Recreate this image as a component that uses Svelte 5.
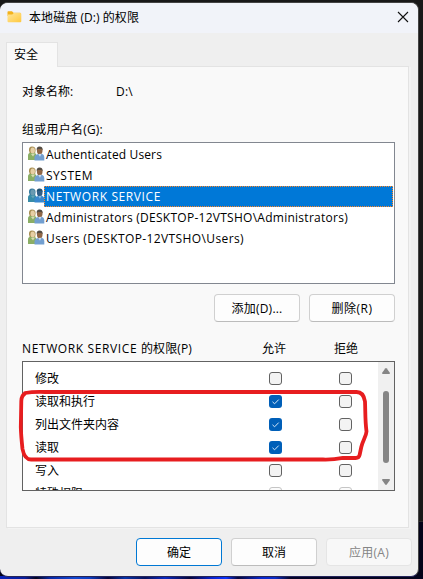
<script>
  const users = [
    { name: 'Authenticated Users', w: 116 },
    { name: 'SYSTEM', w: 47 },
    { name: 'NETWORK SERVICE', w: 115, selected: true },
    { name: 'Administrators (DESKTOP-12VTSHO\\Administrators)', w: 302 },
    { name: 'Users (DESKTOP-12VTSHO\\Users)', w: 198 }
  ];
  const permissions = [
    { name: '修改' },
    { name: '读取和执行', allow: true },
    { name: '列出文件夹内容', allow: true },
    { name: '读取', allow: true },
    { name: '写入' },
    { name: '特殊权限', disabled: true }
  ];

  // Evens out the tracking so that a label takes up its nominal width.
  function fit(node, width) {
    const natural = node.getBoundingClientRect().width;
    node.style.letterSpacing = (width - natural) / node.textContent.length + 'px';
  }
</script>

{#snippet check(on, disabled)}
  <span class="check" class:on class:disabled>
    {#if on}
      <svg width="13" height="13" viewBox="0 0 13 13"><path d="M3.5 6.8 5.6 8.8 9.7 4.6" fill="none" stroke="#d5e8f8" stroke-width="1" /></svg>
    {/if}
  </span>
{/snippet}

<div class="desktop">
  <div class="window">
    <header>
      <svg class="folder" width="15" height="12" viewBox="0 0 15 12">
        <defs><linearGradient id="fold" x2="1" y2="1"><stop stop-color="#ffe69a" /><stop offset="1" stop-color="#ffc83e" /></linearGradient></defs>
        <path d="M.5 1Q.5.2 1.3.2H5L6.5 1.8H13Q14 1.8 14 3V5H.5Z" fill="#f3b21c" />
        <path d="M.5 3.5H5.3L6.8 1.9H13.3Q14.3 1.9 14.3 2.9V10.3Q14.3 11.3 13.3 11.3H1.5Q.5 11.3 .5 10.3Z" fill="url(#fold)" />
      </svg>
      <span class="title"><span use:fit={110}>本地磁盘 (D:) 的权限</span></span>
      <svg class="close" width="12" height="12" viewBox="0 0 12 12"><path d="M1 1 11 11M11 1 1 11" stroke="#111" stroke-width="1.1" /></svg>
    </header>

    <div class="tab">安全</div>
    <main>
      <div class="object"><span class="key">对象名称:</span><span use:fit={17}>D:\</span></div>
      <div class="label"><span use:fit={81}>组或用户名(G):</span></div>

      <div class="users">
        {#each users as u}
          <div class="user" class:selected={u.selected}>
            <svg width="17" height="17" viewBox="1 0 17 17">
              <path d="M1 15V10.5Q1 7.6 4 7.4H6Q9 7.6 9.5 10V15Z" fill={u.selected ? '#388ca8' : '#8bae65'} />
              <path d="M2 5.5Q1.6 1.7 5 1.5 8.7 1.5 8.6 5L8.2 8H2.7Z" fill={u.selected ? '#397c9f' : '#a89055'} />
              <ellipse cx="5.7" cy="5.5" rx="2.2" ry="3" fill={u.selected ? '#6a9bb1' : '#e6cfa4'} />
              <path d="M4 9 6 11.5 8 8.5" fill={u.selected ? '#66a4b8' : '#d6ddb5'} />
              <path d="M7.5 15.5V12Q8 9.3 11 9L15 8.8Q17.2 9.7 17.3 12V15.5Z" fill={u.selected ? '#3988ce' : '#729fd0'} />
              <ellipse cx="12.7" cy="5.8" rx="2.8" ry="3.7" fill={u.selected ? '#315f86' : '#8f6747'} />
              <path d="M9.7 5Q9.4 1.8 12.5 1.6 16 1.7 15.6 5.5L14.5 4 11 4Z" fill={u.selected ? '#23516f' : '#534c43'} />
              <path d="M11.2 9 13 11.8 14.6 8.8" fill={u.selected ? '#83b8e0' : '#c9daee'} />
            </svg>
            <div class="name"><span use:fit={u.w}>{u.name}</span></div>
          </div>
        {/each}
      </div>

      <div class="actions">
        <button><span use:fit={51}>添加(D)...</span></button>
        <button><span use:fit={41}>删除(R)</span></button>
      </div>

      <div class="heads">
        <span class="who"><span use:fit={119}>NETWORK SERVICE&nbsp;</span><span use:fit={51}>的权限(P)</span></span>
        <span class="col">允许</span><span class="col">拒绝</span>
      </div>

      <div class="perms">
        <div class="rows">
          {#each permissions as p}
            <div class="perm">
              <span class="pname">{p.name}</span>
              {@render check(p.allow, p.disabled)}
              {@render check(false, p.disabled)}
            </div>
          {/each}
        </div>
        <div class="scroll">
          <svg width="8" height="6" viewBox="0 0 8 6"><path d="M3.2.5Q4 -.3 4.8 .5L8 5Q8 6 7 6H1Q0 6 0 5Z" fill="#858585" /></svg>
          <i></i>
          <svg width="8" height="6" viewBox="0 0 8 6"><path d="M3.2 5.5Q4 6.3 4.8 5.5L8 1Q8 0 7 0H1Q0 0 0 1Z" fill="#858585" /></svg>
        </div>
        <svg class="mark" width="360" height="84" viewBox="0 0 360 84">
          <path d="M10 10Q18 8.6 30 9H341Q348.5 8.6 350 18.5C350.5 30 350 37 351.5 48.5 351.3 53 348 57 346.3 64L344.6 72Q344 75.3 340 75L328 74.8Q318 76.8 308 76.5H16Q9.5 76.5 7.5 66 6 52 5.8 44L6.3 18Q6.5 12.5 10 10.5" fill="none" stroke="#e71d1f" stroke-width="3.8" stroke-linecap="round" stroke-linejoin="round" />
        </svg>
      </div>
    </main>

    <footer>
      <button class="default">确定</button>
      <button>取消</button>
      <button class="off"><span use:fit={40}>应用(A)</span></button>
    </footer>
  </div>
</div>

<style>
  .desktop {
    box-sizing: border-box; width: 423px; height: 579px; padding-top: 2px; overflow: hidden;
    background:
      linear-gradient(90deg, #0822b8 0, #081d9a 25px, #04051f 36px, #0728a5 50px, #1147d0 75px, #0b3cc0 90px, #05043a 108px, #0633a8 125px, #06105c 145px, #0828c0 165px, #050438 190px, #0722d0 212px, #0a33ff 226px, #04063c 238px, #0828d0 262px, #0a2cc8 275px, #040328 290px, #03031c 423px) 0 576px / 423px 3px no-repeat,
      linear-gradient(#181818 521px, #2b2b2b 521px, #2b2b2b 522px, #030318 522px);
    font: 12px/16px "Open Sans", "Noto Sans CJK SC", sans-serif; color: #000;
  }
  .window {
    box-sizing: border-box; width: 419px; height: 575px; border: solid #444; border-width: 1px 1px 1px 0;
    border-bottom-color: #25255a; border-radius: 8px; overflow: hidden; background: #efefef;
    display: flex; flex-direction: column;
  }
  header { height: 30px; background: #f1f3f9; display: flex; align-items: center; padding: 0 9px 0 7px; flex: none; }
  .folder { margin-top: -3px; }
  .title { margin: 0 0 0 7px; flex: 1; white-space: nowrap; }
  .close { margin-top: -2px; }
  .tab {
    box-sizing: border-box; width: 52px; height: 25px; margin: 9px 0 -1px 6px; padding: 4px 0 0 7px;
    border: 1px solid #e3e3e3; border-bottom: 0; background: #f9f9f9; position: relative; z-index: 1; flex: none;
  }
  main {
    box-sizing: border-box; width: 403px; height: 462px; margin-left: 6px; padding: 17px 13px 0 15px; flex: none;
    border: 1px solid #e3e3e3; background: #f9f9f9; box-shadow: 2px 1px 0 #f3f3f3;
  }
  .object { display: flex; height: 16px; }
  .key { width: 94px; }
  .label { height: 16px; margin-top: 22px; }
  .label, .who, .name, button { white-space: nowrap; }
  .users { box-sizing: border-box; width: 373px; height: 142px; margin-top: 4px; border: 1px solid #828790; padding: 1px; background: #fff; }
  .user { display: flex; height: 21px; }
  .user svg { margin: 1px 0 0 4px; flex: none; }
  .name { box-sizing: border-box; width: 349px; height: 21px; padding: 2px 0 0 1px; margin-left: -1px; border: 1px solid transparent; line-height: 16px; }
  .selected .name { background: #0078d7; border: 1px dotted #ff8728; color: #fff; }
  .actions { display: flex; gap: 9px; justify-content: flex-end; margin: 10px 0 0; width: 373px; }
  button {
    box-sizing: border-box; width: 86px; height: 28px; padding: 1px 0 0; border: 1px solid #d0d0d0; border-bottom-color: #bcbcbc;
    border-radius: 4px; background: #fdfdfd; font: inherit; color: #000; text-align: center;
  }
  .heads { display: flex; height: 16px; margin-top: 19px; }
  .who { width: 240px; flex: none; }
  .col { width: 72px; flex: none; }
  .col:last-child { width: 61px; }
  .perms { box-sizing: border-box; position: relative; width: 373px; height: 130px; margin-top: 4px; border: 1px solid #626262; background: #fff; display: flex; }
  .rows { flex: 1; min-width: 0; overflow: hidden; padding-top: 5px; height: 123px; }
  .perm { display: flex; height: 23px; align-items: center; padding-left: 12px; }
  .pname { width: 234px; flex: none; }
  .check { box-sizing: border-box; width: 13px; height: 13px; border: 1px solid #626262; border-radius: 3px; background: #f3f3f3; margin-right: 57px; flex: none; }
  .check.on { background: #005fb8; border: 0; }
  .check.disabled { border-color: #c5c5c5; background: #fbfbfb; }
  .check svg { display: block; }
  .scroll { width: 16px; flex: none; background: #f0f0f0; display: flex; flex-direction: column; align-items: center; padding: 6px 0 5px; box-sizing: border-box; justify-content: space-between; }
  .scroll i { width: 6px; height: 72px; border-radius: 3px; background: #858585; }
  .mark { position: absolute; left: -8px; top: 21px; }
  footer { display: flex; gap: 9px; padding: 10px 0 0 136px; }
  .default { border-color: #0078d4; }
  .off { border-color: #e5e5e5; background: #f8f8f8; color: #858585; }
</style>
